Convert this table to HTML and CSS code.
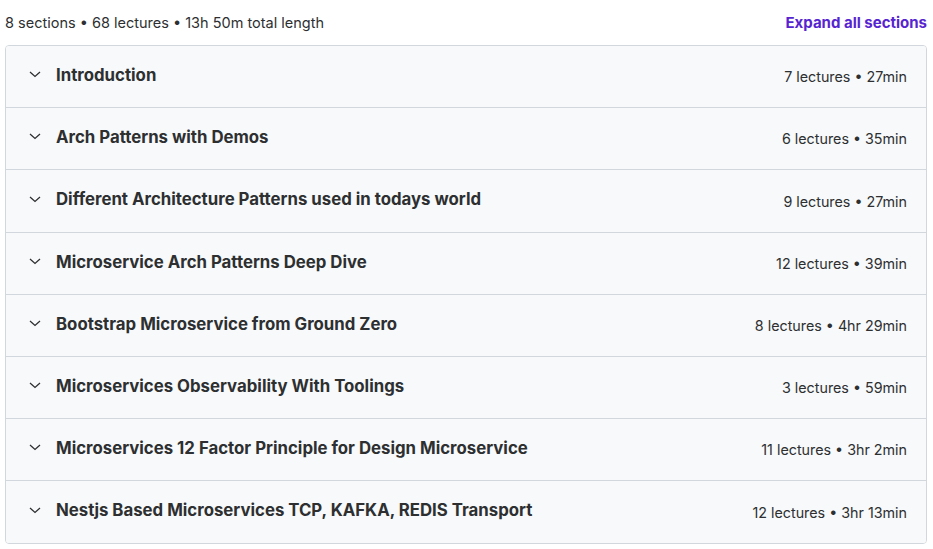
FILE: index.html
```html
<!DOCTYPE html>
<html>
<head>
  <title>Course content</title>
  <link rel="stylesheet" href="styles.css">
</head>
<body>
  <div class="curriculum">
    <!-- Summary bar -->
    <div class="summary">
      <span>8 sections • 68 lectures • 13h 50m total length</span>
      <button class="expand-all">Expand all sections</button>
    </div>

    <!-- Section list -->
    <div class="sections">
      <div class="section">
        <span class="chevron"><svg viewBox="0 0 12 7"><path d="M1 1 6 5.5 11 1"/></svg></span>
        <span class="section-title">Introduction</span>
        <span class="section-meta">7 lectures • 27min</span>
      </div>
      <div class="section">
        <span class="chevron"><svg viewBox="0 0 12 7"><path d="M1 1 6 5.5 11 1"/></svg></span>
        <span class="section-title">Arch Patterns with Demos</span>
        <span class="section-meta">6 lectures • 35min</span>
      </div>
      <div class="section">
        <span class="chevron"><svg viewBox="0 0 12 7"><path d="M1 1 6 5.5 11 1"/></svg></span>
        <span class="section-title">Different Architecture Patterns used in todays world</span>
        <span class="section-meta">9 lectures • 27min</span>
      </div>
      <div class="section">
        <span class="chevron"><svg viewBox="0 0 12 7"><path d="M1 1 6 5.5 11 1"/></svg></span>
        <span class="section-title">Microservice Arch Patterns Deep Dive</span>
        <span class="section-meta">12 lectures • 39min</span>
      </div>
      <div class="section">
        <span class="chevron"><svg viewBox="0 0 12 7"><path d="M1 1 6 5.5 11 1"/></svg></span>
        <span class="section-title">Bootstrap Microservice from Ground Zero</span>
        <span class="section-meta">8 lectures • 4hr 29min</span>
      </div>
      <div class="section">
        <span class="chevron"><svg viewBox="0 0 12 7"><path d="M1 1 6 5.5 11 1"/></svg></span>
        <span class="section-title">Microservices Observability With Toolings</span>
        <span class="section-meta">3 lectures • 59min</span>
      </div>
      <div class="section">
        <span class="chevron"><svg viewBox="0 0 12 7"><path d="M1 1 6 5.5 11 1"/></svg></span>
        <span class="section-title">Microservices 12 Factor Principle for Design Microservice</span>
        <span class="section-meta">11 lectures • 3hr 2min</span>
      </div>
      <div class="section">
        <span class="chevron"><svg viewBox="0 0 12 7"><path d="M1 1 6 5.5 11 1"/></svg></span>
        <span class="section-title">Nestjs Based Microservices TCP, KAFKA, REDIS Transport</span>
        <span class="section-meta">12 lectures • 3hr 13min</span>
      </div>
    </div>
  </div>
</body>
</html>
```

FILE: styles.css
```css
/* Page */
body {
  margin: 0;
  font-family: Inter, "Noto Sans", Arial, sans-serif;
  color: #2d2f31;
  background-color: #fff;
}

.curriculum {
  margin: 0 6px 0 5px;
}

/* Summary bar */
.summary {
  display: flex;
  align-items: center;
  justify-content: space-between;
  height: 45px;
  font-size: 14.5px;
  color: #2d2f31;
}

.expand-all {
  padding: 0;
  border: none;
  background: none;
  font-family: inherit;
  font-size: 15px;
  font-weight: 700;
  color: #5624d0;
  cursor: pointer;
}

/* Section list */
.sections {
  border: 1px solid #d1d7dc;
  border-radius: 4px;
  overflow: hidden;
}

.section {
  display: flex;
  align-items: center;
  height: 61px;
  padding: 0 19px 0 23px;
  background-color: #f7f9fa;
  border-bottom: 1px solid #d1d7dc;
}

.section:nth-child(3),
.section:last-child {
  height: 62px;
}

.section:last-child {
  border-bottom: none;
}

.chevron {
  display: flex;
  width: 12px;
  height: 7px;
  margin: 0 15px 4px 0;
}

.chevron svg {
  width: 12px;
  height: 7px;
  fill: none;
  stroke: #2d2f31;
  stroke-width: 1.3;
}

.section-title {
  flex: 1;
  margin-bottom: 4px;
  font-size: 16.8px;
  font-weight: 700;
  color: #2d2f31;
}

.section-meta {
  font-size: 14.3px;
  color: #2d2f31;
}
```
